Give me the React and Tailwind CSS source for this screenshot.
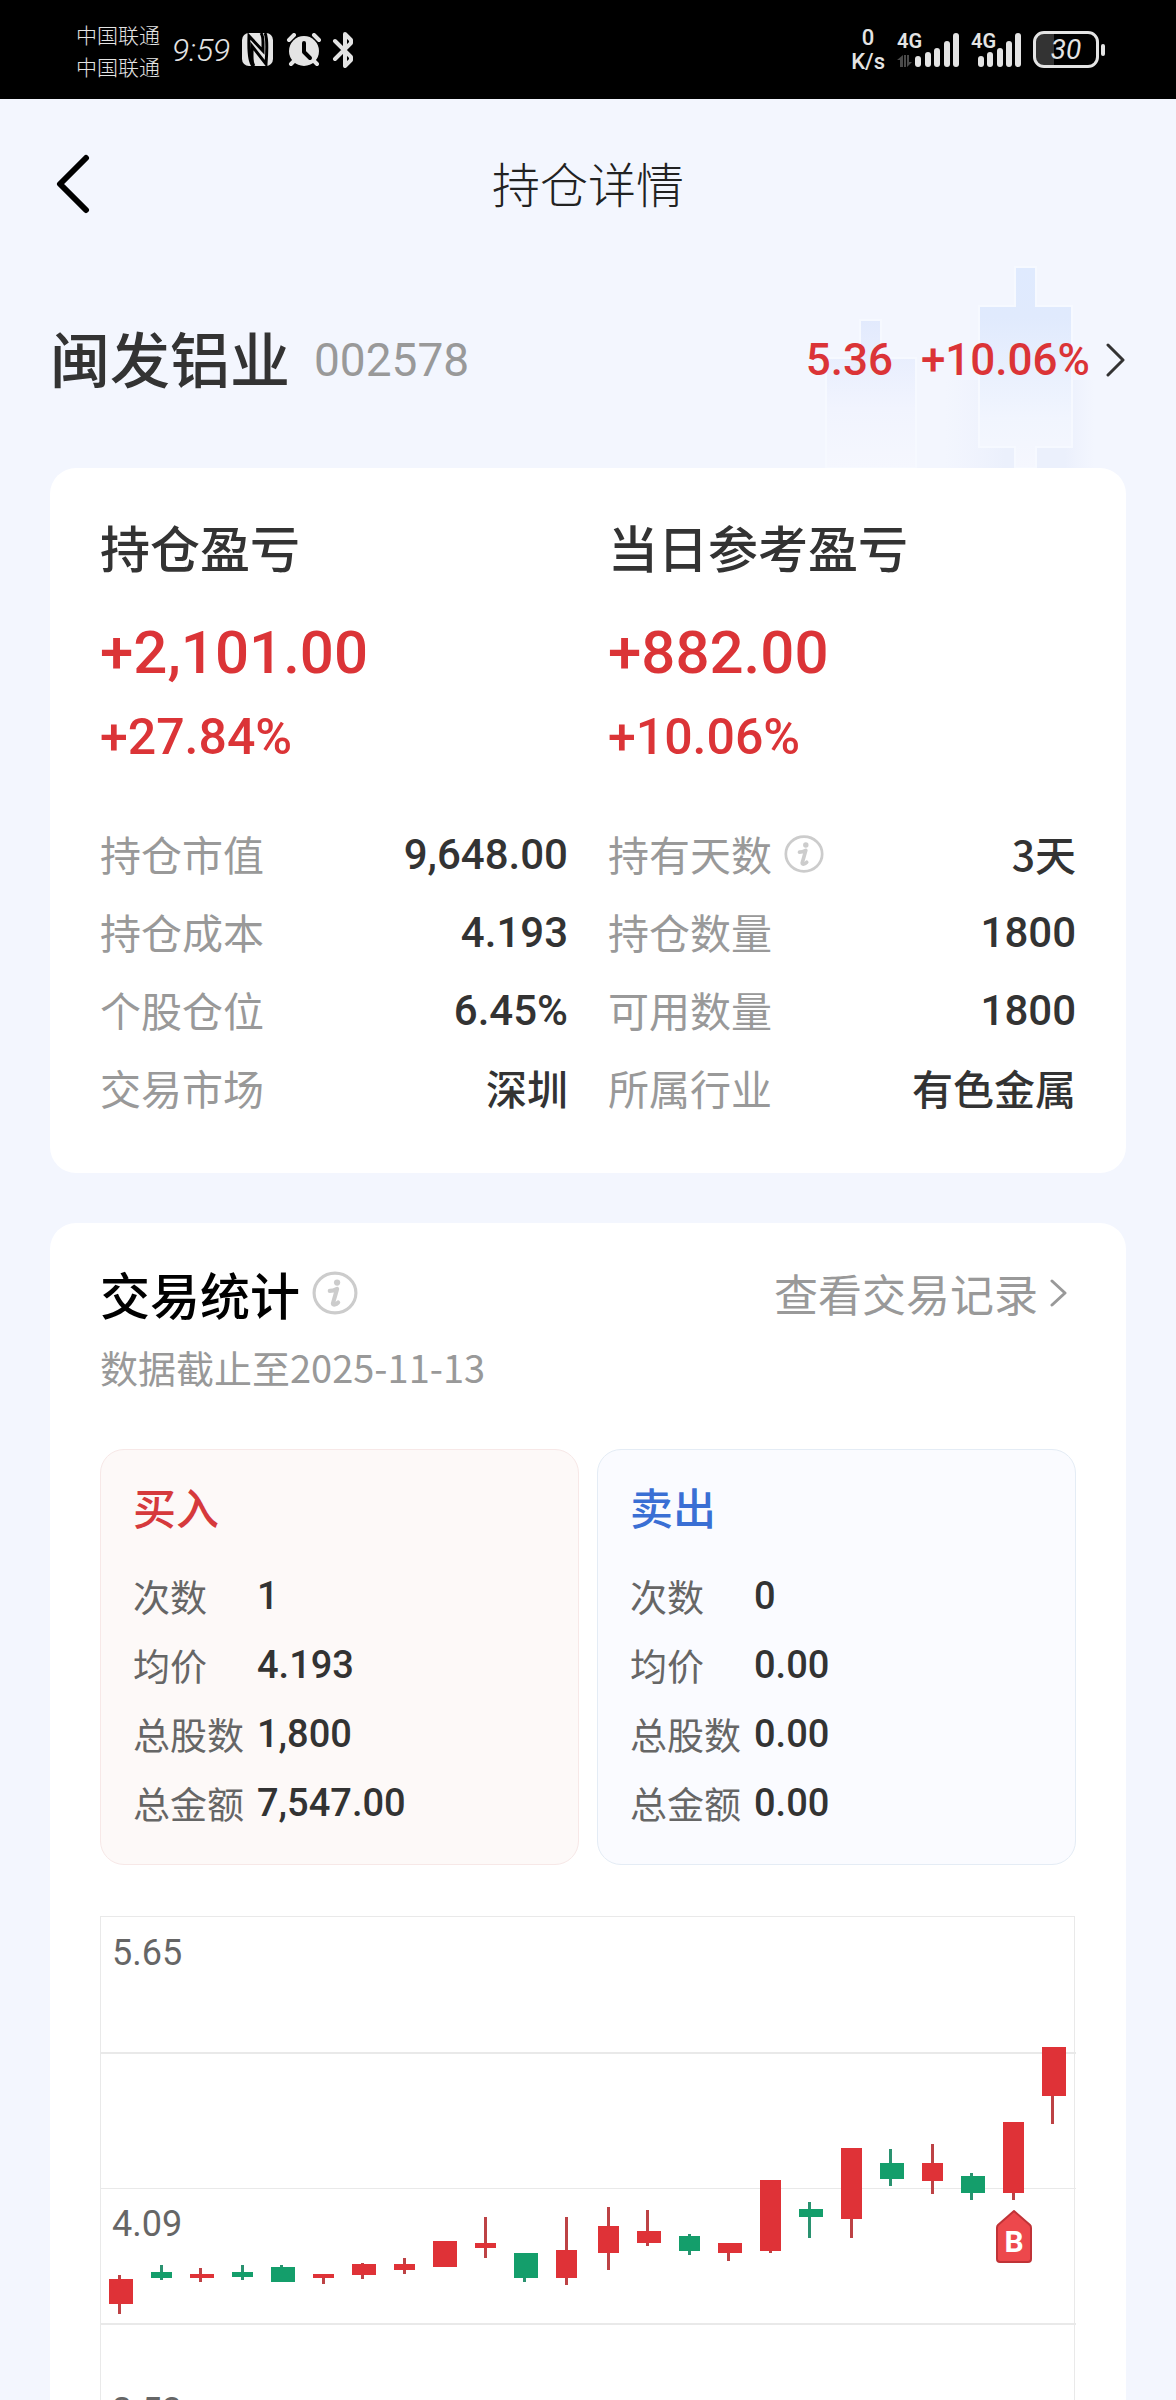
const CANDLES = [
  // bodyX, bodyWidth, wickX, high, top, bottom, low, rising
  [9, 24, 18, 359, 363, 388, 398, true],
  [51, 21, 60, 349, 356, 362, 364, false],
  [90, 24, 99, 352, 358, 362, 366, true],
  [132, 21, 141, 349, 356, 361, 364, false],
  [171, 24, 180, 349, 351, 366, 366, false],
  [213, 21, 222, 358, 358, 362, 368, true],
  [252, 24, 261, 347, 348, 359, 363, true],
  [294, 21, 303, 342, 348, 354, 358, true],
  [333, 24, 342, 325, 325, 351, 351, true],
  [375, 21, 384, 301, 327, 332, 342, true],
  [414, 24, 423, 337, 337, 362, 366, false],
  [456, 21, 465, 301, 334, 362, 369, true],
  [498, 21, 507, 291, 310, 337, 354, true],
  [537, 24, 546, 294, 315, 327, 330, true],
  [579, 21, 588, 318, 320, 335, 339, false],
  [618, 24, 627, 327, 327, 337, 345, true],
  [660, 21, 669, 264, 264, 335, 337, true],
  [699, 24, 708, 286, 293, 301, 322, false],
  [741, 21, 750, 232, 232, 303, 322, true],
  [780, 24, 789, 233, 247, 263, 270, false],
  [822, 21, 831, 228, 247, 265, 278, true],
  [861, 24, 870, 257, 260, 277, 284, false],
  [903, 21, 912, 206, 206, 277, 284, true],
  [942, 24, 951, 131, 131, 180, 208, true],
];

const HOLDING = [
  ["持仓市值", "9,648.00", "持有天数", "3天"],
  ["持仓成本", "4.193", "持仓数量", "1800"],
  ["个股仓位", "6.45%", "可用数量", "1800"],
  ["交易市场", "深圳", "所属行业", "有色金属"],
];

const BUY = [
  ["次数", "1"],
  ["均价", "4.193"],
  ["总股数", "1,800"],
  ["总金额", "7,547.00"],
];

const SELL = [
  ["次数", "0"],
  ["均价", "0.00"],
  ["总股数", "0.00"],
  ["总金额", "0.00"],
];

const NUM = "font-['Roboto','Noto_Sans_CJK_SC',sans-serif]";

function Signal({ data }) {
  const bars = data ? [18, 28, 37, 47, 56] : [7, 16, 26, 35, 44];
  const tops = [27, 23, 19, 12, 4];
  return (
    <div className={data ? "relative h-[42px] w-[62px]" : "relative h-[42px] w-[50px]"}>
      <svg viewBox={data ? "0 0 62 42" : "0 0 50 42"} className="size-full" fill="#e4e4e4" aria-hidden="true">
        {data && <path fill="#4a4a4a" d="M6 26v12H3v-7H0zM7 26h2v12H7zM10 38V26h2v7h3z" />}
        {bars.map((x, i) => (
          <rect key={x} x={x} y={tops[i]} width="6" height={38 - tops[i]} rx="3" />
        ))}
      </svg>
      <span className="absolute top-0 left-0 font-['Roboto',sans-serif] text-[20px] leading-6 font-semibold">4G</span>
    </div>
  );
}

function StatusBar() {
  return (
    <div className="flex h-[99px] items-center bg-black pr-[71px] pl-[76px] text-[#e4e4e4]">
      <div className="text-[21px] leading-8 font-light">
        <div>中国联通</div>
        <div>中国联通</div>
      </div>
      <div className="ml-3 font-['Roboto',sans-serif] text-[32px] font-light italic">9:59</div>
      <svg viewBox="0 0 32 34" className="ml-3 h-[34px] w-8" role="img" aria-label="NFC">
        <rect x="0" y="0" width="31" height="33" rx="7" fill="#e4e4e4" />
        <path
          d="M11 33Q6 28 7 3l14 15V9Q21 3 19 0M23 0Q26 6 24 31L10 13v10q0 7 2 10"
          fill="none"
          stroke="#000"
          strokeWidth="3"
        />
      </svg>
      <svg viewBox="0 0 36 34" className="ml-3 h-[34px] w-9" role="img" aria-label="闹钟">
        <circle cx="18" cy="18" r="15" fill="#e4e4e4" />
        <path d="M5 31l4-4M31 31l-4-4M3 7l5-5M33 7l-5-5" stroke="#e4e4e4" strokeWidth="4" strokeLinecap="round" />
        <path d="M18 10v9l6 6" fill="none" stroke="#000" strokeWidth="4" strokeLinecap="round" strokeLinejoin="round" />
      </svg>
      <svg viewBox="0 0 24 36" className="ml-2.5 h-9 w-6" role="img" aria-label="蓝牙">
        <path d="M3 9l16 16v3l-6 6V2l6 6v3L3 27" fill="none" stroke="#e4e4e4" strokeWidth="4" strokeLinecap="round" strokeLinejoin="round" />
      </svg>
      <div className="ml-auto flex items-center">
        <div className="mr-3 text-center font-['Roboto',sans-serif] text-[22px] leading-6 font-medium">
          <div>0</div>
          <div>K/s</div>
        </div>
        <Signal data />
        <div className="ml-3">
          <Signal />
        </div>
        <div className="ml-3 flex items-center gap-0.5">
          <div className="flex h-[37px] w-[66px] items-center justify-center rounded-[11px] border-3 border-[#e4e4e4] bg-linear-to-r from-[#333] from-30% to-black to-30% font-['Roboto',sans-serif] text-[28px] italic">
            30
          </div>
          <div className="h-3 w-1 rounded-sm bg-[#e4e4e4]" />
        </div>
      </div>
    </div>
  );
}

function InfoButton({ label, large }) {
  return (
    <button type="button" aria-label={label} className="block">
      <svg viewBox="0 0 44 44" className={large ? "size-[46px]" : "size-10"} fill="none" stroke="#ccc">
        <ellipse cx="22" cy="22" rx="20" ry="19" strokeWidth="3" />
        <circle cx="24" cy="12" r="3" fill="#ccc" stroke="none" />
        <path d="M17 20c3 0 5-1 7-2l-4 14c0 2 3 1 5-1" strokeWidth="4" strokeLinecap="round" strokeLinejoin="round" />
      </svg>
    </button>
  );
}

function Value({ children }) {
  const chinese = /[\u4e00-\u9fff]/.test(children);
  return (
    <dd
      className={
        chinese
          ? "ml-auto text-[41px] font-medium text-[#333]"
          : `ml-auto ${NUM} text-[42px] font-medium text-[#333]`
      }
    >
      {children}
    </dd>
  );
}

function Profit({ title, amount, percent }) {
  return (
    <div>
      <h2 className="text-[50px] leading-14 font-medium text-[#333]">{title}</h2>
      <p className={`mt-[43px] ${NUM} text-[60px] leading-[72px] font-medium text-[#db3437]`}>{amount}</p>
      <p className={`mt-5 ${NUM} text-[50px] leading-14 font-medium text-[#db3437]`}>{percent}</p>
    </div>
  );
}

function TradeBox({ title, rows, buy }) {
  return (
    <section
      className={
        buy
          ? "rounded-3xl border border-[#f7e8e7] bg-[#fdf9f8] px-8 pt-7 pb-[26px]"
          : "rounded-3xl border border-[#e4ecf5] bg-[#fafbff] px-8 pt-7 pb-[26px]"
      }
    >
      <h3 className={buy ? "text-[43px] leading-14 font-medium text-[#d63a3c]" : "text-[43px] leading-14 font-medium text-[#3a6fd4]"}>
        {title}
      </h3>
      <dl className="mt-7">
        {rows.map(([label, value]) => (
          <div key={label} className="flex h-[69px] items-center">
            <dt className="w-[124px] text-[37px] text-[#666]">{label}</dt>
            <dd className={`${NUM} text-[38px] font-medium text-[#333]`}>{value}</dd>
          </div>
        ))}
      </dl>
    </section>
  );
}

function Chart() {
  return (
    <svg viewBox="0 0 976 544" className="mt-[51px] block w-full" role="img" aria-label="股价走势图">
      <g fill="#e9e9e9">
        <rect x="0" y="0" width="975" height="1" />
        <rect x="0" y="136" width="976" height="2" />
        <rect x="0" y="272" width="976" height="1" />
        <rect x="0" y="407" width="976" height="2" />
        <rect x="0" y="543" width="976" height="1" />
        <rect x="0" y="0" width="1" height="544" />
        <rect x="974" y="0" width="1" height="544" />
      </g>
      <g fill="#666" fontSize="36" fontFamily="Roboto, sans-serif">
        <text x="12" y="49">5.65</text>
        <text x="12" y="320">4.09</text>
        <text x="12" y="507">2.53</text>
      </g>
      {CANDLES.map(([x, w, wick, high, top, bottom, low, rising]) => (
        <g key={x}>
          <rect x={wick} y={high} width="3" height={low - high} fill={rising ? "#bd4245" : "#2a9270"} />
          <rect x={x} y={top} width={w} height={bottom - top} fill={rising ? "#df3237" : "#149e6b"} />
        </g>
      ))}
      <path
        d="M914 295l16 14q1 1 1 3v31q0 3-3 3h-28q-3 0-3-3v-31q0-2 1-3z"
        fill="#ed484c"
        stroke="#c03337"
        strokeWidth="2"
        strokeLinejoin="round"
      />
      <text x="914" y="336" textAnchor="middle" fontSize="30" fontWeight="700" fill="#fff" fontFamily="Roboto, sans-serif">
        B
      </text>
    </svg>
  );
}

function CandleBackdrop() {
  return (
    <svg viewBox="0 0 376 208" className="absolute right-0 -bottom-4 h-[208px] w-[376px]" aria-hidden="true">
      <defs>
        <linearGradient id="tall" x1="0" y1="0" x2="0" y2="1">
          <stop offset="0" stopColor="#dfeafe" />
          <stop offset="0.25" stopColor="#e0eafd" />
          <stop offset="0.75" stopColor="#f1f5fe" />
          <stop offset="1" stopColor="#f5f7fe" />
        </linearGradient>
        <linearGradient id="short" x1="0" y1="0" x2="0" y2="1">
          <stop offset="0" stopColor="#e2eafd" />
          <stop offset="0.6" stopColor="#f1f4fe" />
          <stop offset="1" stopColor="#f5f7fe" />
        </linearGradient>
        <linearGradient id="shade" x1="0" y1="0" x2="1" y2="0">
          <stop offset="0" stopColor="#edf1fd" stopOpacity="0" />
          <stop offset="0.4" stopColor="#ebf0fc" />
          <stop offset="0.8" stopColor="#ebf0fc" />
          <stop offset="1" stopColor="#edf1fd" stopOpacity="0" />
        </linearGradient>
      </defs>
      <rect x="145" y="120" width="150" height="88" fill="url(#shade)" />
      <path d="M60 60h21v38h35v110H26V98h34z" fill="url(#short)" stroke="#f6f9ff" strokeWidth="2" />
      <path d="M215 7h21v39h36v141h-36v21h-21v-21h-36V46h36z" fill="url(#tall)" stroke="#f6f9ff" strokeWidth="2" />
    </svg>
  );
}

export default function App() {
  return (
    <div className="h-screen overflow-hidden bg-[#f3f6fe] font-['Noto_Sans_CJK_SC',sans-serif]">
      <StatusBar />
      <header className="grid h-[169px] grid-cols-[1fr_auto_1fr] items-center px-[50px]">
        <button type="button" aria-label="返回" className="w-12">
          <svg viewBox="0 0 48 60" className="h-[60px] w-12" fill="none" stroke="#000" strokeWidth="6" strokeLinecap="round" strokeLinejoin="round">
            <path d="M36 4L10 30l26 26" />
          </svg>
        </button>
        <h1 className="pb-1 text-5xl font-light text-[#222]">持仓详情</h1>
      </header>

      <main>
        <section className="relative mb-4 flex h-[184px] items-center px-[50px]">
          <CandleBackdrop />
          <h2 className="pb-1.5 text-[60px] leading-none font-medium text-[#333]">闽发铝业</h2>
          <span className={`ml-6 ${NUM} text-[46px] text-[#999]`}>002578</span>
          <a href="#quote" className={`relative ml-auto flex items-center ${NUM} text-[44px] font-medium text-[#db3437]`}>
            <span>5.36</span>
            <span className="ml-7">+10.06%</span>
            <svg viewBox="0 0 20 34" className="ml-4 h-[34px] w-5" fill="none" stroke="#333" strokeWidth="3" strokeLinecap="round" strokeLinejoin="round">
              <path d="M2 2l15 15L2 32" />
            </svg>
          </a>
        </section>

        <section className="mx-[50px] mb-[50px] rounded-[26px] bg-white px-[50px] pt-[50px] pb-[46px]">
          <div className="grid grid-cols-2 gap-x-10">
            <Profit title="持仓盈亏" amount="+2,101.00" percent="+27.84%" />
            <Profit title="当日参考盈亏" amount="+882.00" percent="+10.06%" />
          </div>
          <dl className="mt-[50px] grid grid-cols-2 gap-x-10">
            {HOLDING.flatMap(([l1, v1, l2, v2]) =>
              [[l1, v1], [l2, v2]].map(([label, value]) => (
                <div key={label} className="flex h-[78px] items-center">
                  <dt className="flex items-center gap-3 text-[41px] text-[#999]">
                    {label}
                    {label === "持有天数" && <InfoButton label="持有天数说明" />}
                  </dt>
                  <Value>{value}</Value>
                </div>
              ))
            )}
          </dl>
        </section>

        <section className="mx-[50px] rounded-[26px] bg-white px-[50px] pt-[42px] pb-[50px]">
          <div className="flex items-center">
            <h2 className="mr-3 text-[50px] leading-14 font-medium text-black">交易统计</h2>
            <InfoButton label="交易统计说明" large />
            <a href="#records" className="ml-auto flex items-center pr-2 text-[44px] leading-14 text-[#999]">
              查看交易记录
              <svg viewBox="0 0 18 28" className="ml-3 h-7 w-[18px]" fill="none" stroke="#999" strokeWidth="3" strokeLinecap="round" strokeLinejoin="round">
                <path d="M2 2l13 12L2 26" />
              </svg>
            </a>
          </div>
          <p className="mt-[22px] text-[38px] leading-12 text-[#999]">数据截止至2025-11-13</p>
          <div className="mt-[58px] grid grid-cols-2 gap-[18px]">
            <TradeBox title="买入" rows={BUY} buy />
            <TradeBox title="卖出" rows={SELL} />
          </div>
          <Chart />
        </section>
      </main>
    </div>
  );
}
